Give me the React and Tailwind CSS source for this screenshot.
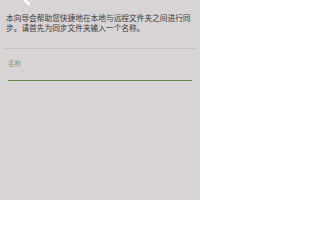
export default function App() {
  return (
    <div
      className="relative w-[200px] h-[200px] overflow-hidden bg-[#d8d4d5]"
      style={{ fontFamily: '"Noto Sans CJK SC", "Noto Sans", sans-serif' }}
    >
      {/* stray stroke peeking in at the top */}
      <svg className="absolute left-0 top-0" width="40" height="8" viewBox="0 0 40 8">
        <line x1="23.5" y1="-1" x2="29" y2="4" stroke="#ffffff" strokeWidth="2.2" strokeLinecap="round" />
      </svg>

      <div className="px-[6px] pt-[13px]">
        <p className="text-[7.7px] leading-[9.5px] text-[#3a3838]">
          本向导会帮助您快捷地在本地与远程文件夹之间进行同步。请首先为同步文件夹输入一个名称。
        </p>
      </div>

      <div className="mx-[5px] mt-[16px] h-px bg-[#c4c0c1]" />

      <div className="px-[8px] pt-[10px]">
        <div className="text-[6.5px] leading-[8px] text-[#7f9a72]">名称</div>
        <div className="h-[14px] border-b-[1.5px] border-[#5e8a4a]" />
      </div>
    </div>
  );
}
